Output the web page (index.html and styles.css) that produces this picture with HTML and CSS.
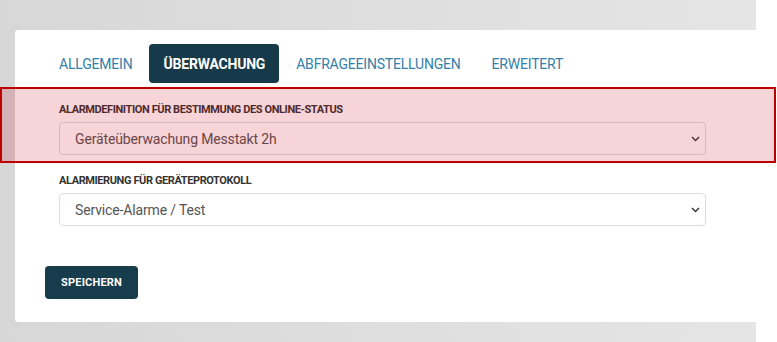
FILE: index.html
```html
<!DOCTYPE html>
<html lang="de">
<head>
<meta charset="utf-8">
<title>Überwachung</title>
<link rel="stylesheet" href="styles.css">
</head>
<body>
<div class="stage">
  <div class="card">
    <nav class="tabs">
      <a class="tab">ALLGEMEIN</a>
      <a class="tab active">ÜBERWACHUNG</a>
      <a class="tab">ABFRAGEEINSTELLUNGEN</a>
      <a class="tab">ERWEITERT</a>
    </nav>
    <div class="form">
      <div class="field first">
        <div class="label">ALARMDEFINITION FÜR BESTIMMUNG DES ONLINE-STATUS</div>
        <div class="select">
          <span>Geräteüberwachung Messtakt 2h</span>
          <svg class="chev" width="9" height="6" viewBox="0 0 9 6"><path d="M1 1 L4.5 4.5 L8 1" fill="none" stroke="#3a3a3a" stroke-width="1.5"/></svg>
        </div>
      </div>
      <div class="field">
        <div class="label">ALARMIERUNG FÜR GERÄTEPROTOKOLL</div>
        <div class="select">
          <span>Service-Alarme / Test</span>
          <svg class="chev" width="9" height="6" viewBox="0 0 9 6"><path d="M1 1 L4.5 4.5 L8 1" fill="none" stroke="#3a3a3a" stroke-width="1.5"/></svg>
        </div>
      </div>
    </div>
    <button class="save">SPEICHERN</button>
  </div>
</div>
<div class="highlight"></div>
</body>
</html>
```

FILE: styles.css
```css
html, body {
  margin: 0;
  padding: 0;
  background: #ffffff;
  font-family: Roboto, "Liberation Sans", sans-serif;
}
body {
  width: 777px;
  height: 342px;
  overflow: hidden;
  position: relative;
}
.stage {
  width: 741px;
  height: 312px;
  padding: 30px 0 0 15px;
  background: linear-gradient(to right, #d7d7d7, #e5e5e5);
}
.card {
  box-sizing: border-box;
  width: 741px;
  height: 292px;
  background: #ffffff;
  border-radius: 3px 0 0 3px;
  padding: 14px 0 0 30px;
}
.tabs {
  display: flex;
  gap: 3px;
}
.tab {
  display: block;
  height: 39px;
  line-height: 40px;
  padding: 0 14px;
  font-size: 14px;
  letter-spacing: -0.2px;
  color: #3380a8;
  border-radius: 4px;
}
.tab.active {
  background: #173a4a;
  color: #ffffff;
  font-weight: 700;
}
.form {
  padding-left: 14px;
  width: 647px;
}
.field {
  margin-top: 19px;
}
.field.first {
  margin-top: 20px;
}
.label {
  font-size: 11px;
  line-height: 14px;
  font-weight: 700;
  letter-spacing: -0.4px;
  color: #333333;
  margin-bottom: 5px;
}
.select {
  box-sizing: border-box;
  height: 33px;
  border: 1px solid #dcdcdc;
  border-radius: 4px;
  display: flex;
  align-items: center;
  justify-content: space-between;
  padding: 0 5px 0 15px;
  font-size: 14px;
  letter-spacing: -0.15px;
  color: #555555;
}
.chev {
  display: block;
}
.save {
  margin-top: 40px;
  width: 93px;
  height: 33px;
  border: 0;
  border-radius: 4px;
  background: #173c4c;
  color: #ffffff;
  font-family: Roboto, "Liberation Sans", sans-serif;
  font-size: 11px;
  font-weight: 700;
  letter-spacing: 0.2px;
  padding: 0;
}
.highlight {
  position: absolute;
  left: 0;
  top: 87px;
  width: 772px;
  height: 72px;
  border: 2px solid #c00000;
  background: rgba(210, 0, 20, 0.17);
}
```
